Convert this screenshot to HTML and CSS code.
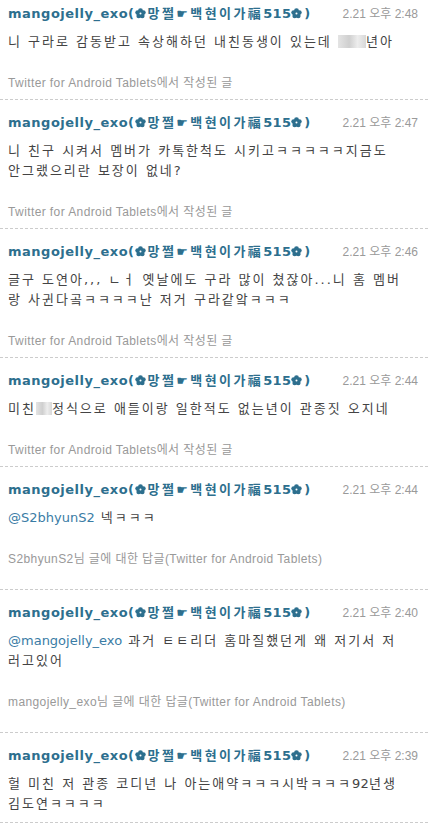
FILE: index.html
```html
<!DOCTYPE html>
<html lang="ko">
<head>
    <meta charset="UTF-8">
    <meta name="viewport" content="width=device-width, initial-scale=1.0">
    <title>mangojelly_exo 타임라인</title>
    <link rel="stylesheet" href="styles.css">
</head>
<body>
    <svg width="0" height="0" class="defs">
        <symbol id="flower" viewBox="0 0 12 12">
            <circle cx="6" cy="2.8" r="2.6"/>
            <circle cx="9.1" cy="5" r="2.6"/>
            <circle cx="7.9" cy="8.7" r="2.6"/>
            <circle cx="4.1" cy="8.7" r="2.6"/>
            <circle cx="2.9" cy="5" r="2.6"/>
            <circle cx="6" cy="6" r="3"/>
            <circle cx="6" cy="6" r="1.1" fill="#fff"/>
        </symbol>
    </svg>
    <ul class="timeline">
        <li class="tweet">
            <div class="tweet-head">
                <a class="author" href="#">mangojelly_exo(<span class="nick"><svg class="flower"><use href="#flower"/></svg>망쩔<span class="deco">☛</span>백현이가福<span class="num">515</span><svg class="flower"><use href="#flower"/></svg></span>)</a>
                <span class="time">2.21 오후 2:48</span>
            </div>
            <p class="tweet-text">니 구라로 감동받고 속상해하던 내친동생이 있는데 <span class="blur wide"></span>년아</p>
            <p class="tweet-source">Twitter for Android Tablets에서 작성된 글</p>
        </li>
        <li class="tweet">
            <div class="tweet-head">
                <a class="author" href="#">mangojelly_exo(<span class="nick"><svg class="flower"><use href="#flower"/></svg>망쩔<span class="deco">☛</span>백현이가福<span class="num">515</span><svg class="flower"><use href="#flower"/></svg></span>)</a>
                <span class="time">2.21 오후 2:47</span>
            </div>
            <p class="tweet-text">니 친구 시켜서 멤버가 카톡한척도 시키고ㅋㅋㅋㅋㅋ지금도<br>안그랬으리란 보장이 없네?</p>
            <p class="tweet-source">Twitter for Android Tablets에서 작성된 글</p>
        </li>
        <li class="tweet">
            <div class="tweet-head">
                <a class="author" href="#">mangojelly_exo(<span class="nick"><svg class="flower"><use href="#flower"/></svg>망쩔<span class="deco">☛</span>백현이가福<span class="num">515</span><svg class="flower"><use href="#flower"/></svg></span>)</a>
                <span class="time">2.21 오후 2:46</span>
            </div>
            <p class="tweet-text">글구 도연아,,, ㄴㅓ 옛날에도 구라 많이 쳤잖아...니 홈 멤버<br>랑 사귄다곸ㅋㅋㅋㅋ난 저거 구라같앜ㅋㅋㅋ</p>
            <p class="tweet-source">Twitter for Android Tablets에서 작성된 글</p>
        </li>
        <li class="tweet">
            <div class="tweet-head">
                <a class="author" href="#">mangojelly_exo(<span class="nick"><svg class="flower"><use href="#flower"/></svg>망쩔<span class="deco">☛</span>백현이가福<span class="num">515</span><svg class="flower"><use href="#flower"/></svg></span>)</a>
                <span class="time">2.21 오후 2:44</span>
            </div>
            <p class="tweet-text">미친<span class="blur"></span>정식으로 애들이랑 일한적도 없는년이 관종짓 오지네</p>
            <p class="tweet-source">Twitter for Android Tablets에서 작성된 글</p>
        </li>
        <li class="tweet reply">
            <div class="tweet-head">
                <a class="author" href="#">mangojelly_exo(<span class="nick"><svg class="flower"><use href="#flower"/></svg>망쩔<span class="deco">☛</span>백현이가福<span class="num">515</span><svg class="flower"><use href="#flower"/></svg></span>)</a>
                <span class="time">2.21 오후 2:44</span>
            </div>
            <p class="tweet-text"><a class="mention" href="#">@S2bhyunS2</a> 넥ㅋㅋㅋ</p>
            <p class="tweet-source">S2bhyunS2님 글에 대한 답글(Twitter for Android Tablets)</p>
        </li>
        <li class="tweet reply">
            <div class="tweet-head">
                <a class="author" href="#">mangojelly_exo(<span class="nick"><svg class="flower"><use href="#flower"/></svg>망쩔<span class="deco">☛</span>백현이가福<span class="num">515</span><svg class="flower"><use href="#flower"/></svg></span>)</a>
                <span class="time">2.21 오후 2:40</span>
            </div>
            <p class="tweet-text"><a class="mention" href="#">@mangojelly_exo</a> 과거 ㅌㅌ리더 홈마질했던게 왜 저기서 저<br>러고있어</p>
            <p class="tweet-source">mangojelly_exo님 글에 대한 답글(Twitter for Android Tablets)</p>
        </li>
        <li class="tweet">
            <div class="tweet-head">
                <a class="author" href="#">mangojelly_exo(<span class="nick"><svg class="flower"><use href="#flower"/></svg>망쩔<span class="deco">☛</span>백현이가福<span class="num">515</span><svg class="flower"><use href="#flower"/></svg></span>)</a>
                <span class="time">2.21 오후 2:39</span>
            </div>
            <p class="tweet-text">헐 미친 저 관종 코디년 나 아는애약ㅋㅋㅋ시박ㅋㅋㅋ<span class="num">92</span>년생<br>김도연ㅋㅋㅋㅋ</p>
        </li>
    </ul>
</body>
</html>
```

FILE: styles.css
```css
body {
    margin: 0;
    background-color: #fff;
    font-family: "DejaVu Sans", "Noto Sans CJK KR", sans-serif;
}
.defs {
    position: absolute;
}
.timeline {
    list-style: none;
    margin: 0;
    padding: 0;
}
.tweet {
    padding: 15px 4px 8px 8px;
    border-bottom: 1px dashed #ccc;
}
.tweet:first-child {
    padding-top: 6px;
}
.tweet.reply {
    padding-bottom: 22px; /* 답글은 아래 여백이 더 큼 */
}
.tweet-head {
    display: flex;
    justify-content: space-between;
    align-items: baseline;
    padding-right: 6px;
    line-height: 16px;
}
.author {
    color: #2d6f8e;
    font-weight: bold;
    font-size: 13px;
    letter-spacing: 0.5px;
    text-decoration: none;
}
.nick {
    letter-spacing: 2.4px;
}
.num {
    letter-spacing: 0.3px;
}
.flower {
    display: inline-block;
    width: 11px;
    height: 11px;
    margin-right: 2px;
    vertical-align: -1px;
    fill: #2d6f8e;
}
.deco {
    font-size: 13px;
}
.time {
    color: #9a9a9a;
    font-family: "Liberation Sans", "Noto Sans CJK KR", sans-serif;
    font-size: 12px;
}
.tweet-text {
    margin: 10px 0 0;
    color: #444;
    font-size: 13px;
    line-height: 20px;
    letter-spacing: 2px;
}
.mention {
    color: #3a7ca5;
    text-decoration: none;
    letter-spacing: 0;
}
.tweet-source {
    margin: 23px 0 0;
    color: #999;
    font-family: "Liberation Sans", "Noto Sans CJK KR", sans-serif;
    font-size: 12px;
    line-height: 16px;
    letter-spacing: 0.4px;
}
/* 모자이크 처리된 부분 */
.blur {
    display: inline-block;
    width: 16px;
    height: 13px;
    vertical-align: -2px;
    background: linear-gradient(90deg, #e4e4e4, #cfcfcf 40%, #ededed 70%, #d8d8d8);
}
.blur.wide {
    width: 28px;
}
```
